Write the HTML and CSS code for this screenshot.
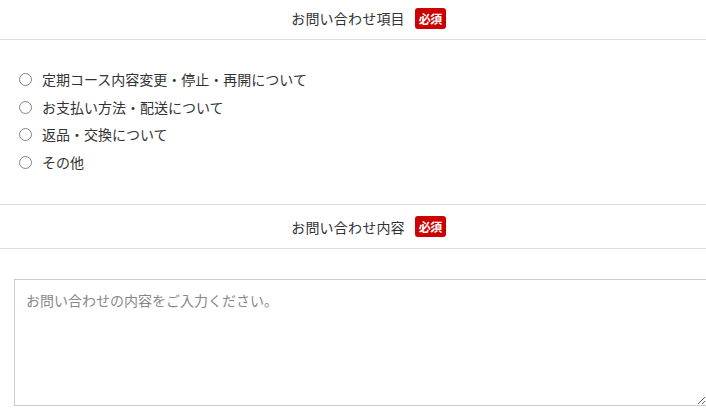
FILE: index.html
```html
<!DOCTYPE html>
<html lang="ja">
<head>
<meta charset="utf-8"/>
<meta content="width=device-width, initial-scale=1.0" name="viewport"/>
<title>お問い合わせ</title>
<link rel="stylesheet" href="styles.css">
</head>
<body>
<form class="contact-form">
  <div class="field-head">
    <span class="field-label">お問い合わせ項目</span>
    <span class="badge">必須</span>
  </div>
  <ul class="choice-list">
    <li><label><input type="radio" name="topic"/> 定期コース内容変更・停止・再開について</label></li>
    <li><label><input type="radio" name="topic"/> お支払い方法・配送について</label></li>
    <li><label><input type="radio" name="topic"/> 返品・交換について</label></li>
    <li><label><input type="radio" name="topic"/> その他</label></li>
  </ul>
  <div class="field-head second">
    <span class="field-label">お問い合わせ内容</span>
    <span class="badge">必須</span>
  </div>
  <div class="message-box">
    <textarea placeholder="お問い合わせの内容をご入力ください。"></textarea>
  </div>
</form>
</body>
</html>
```

FILE: styles.css
```css
html, body {
  margin: 0;
  padding: 0;
  overflow: hidden;
}
body {
  font-family: "Noto Sans CJK JP", "Noto Sans", sans-serif;
  color: #333;
  background: #fff;
  font-size: 14px;
}
.contact-form {
  width: 737px;
}
.field-head {
  display: flex;
  justify-content: center;
  align-items: center;
  gap: 10px;
  height: 40px;
  padding-bottom: 3px;
  box-sizing: border-box;
  border-bottom: 1px solid #ddd;
}
.field-head.second {
  height: 45px;
  padding-bottom: 0;
  border-top: 1px solid #ddd;
}
.field-label {
  font-size: 14px;
  line-height: 20px;
  letter-spacing: 0.2px;
}
.badge {
  background: #cc0000;
  color: #fff;
  font-size: 12px;
  line-height: 21px;
  padding: 0 4px;
  border-radius: 3px;
  font-weight: bold;
  letter-spacing: -0.5px;
}
.choice-list {
  list-style: none;
  margin: 0;
  padding: 26px 0 28px 19px;
}
.choice-list li {
  line-height: 27.5px;
}
.choice-list label {
  display: flex;
  align-items: center;
  gap: 10px;
}
.choice-list input {
  appearance: none;
  margin: 0;
  width: 13px;
  height: 13px;
  border: 1px solid #858585;
  border-radius: 50%;
  box-sizing: border-box;
  background: #fff;
}
.message-box {
  padding: 30px 0 0 14px;
}
.message-box textarea {
  display: block;
  width: 693px;
  height: 127px;
  box-sizing: border-box;
  border: 1px solid #ccc;
  padding: 10px 11px;
  font-family: "Noto Sans CJK JP", sans-serif;
  font-size: 14px;
  color: #333;
  resize: both;
}
.message-box textarea::placeholder {
  color: #888;
}
```
